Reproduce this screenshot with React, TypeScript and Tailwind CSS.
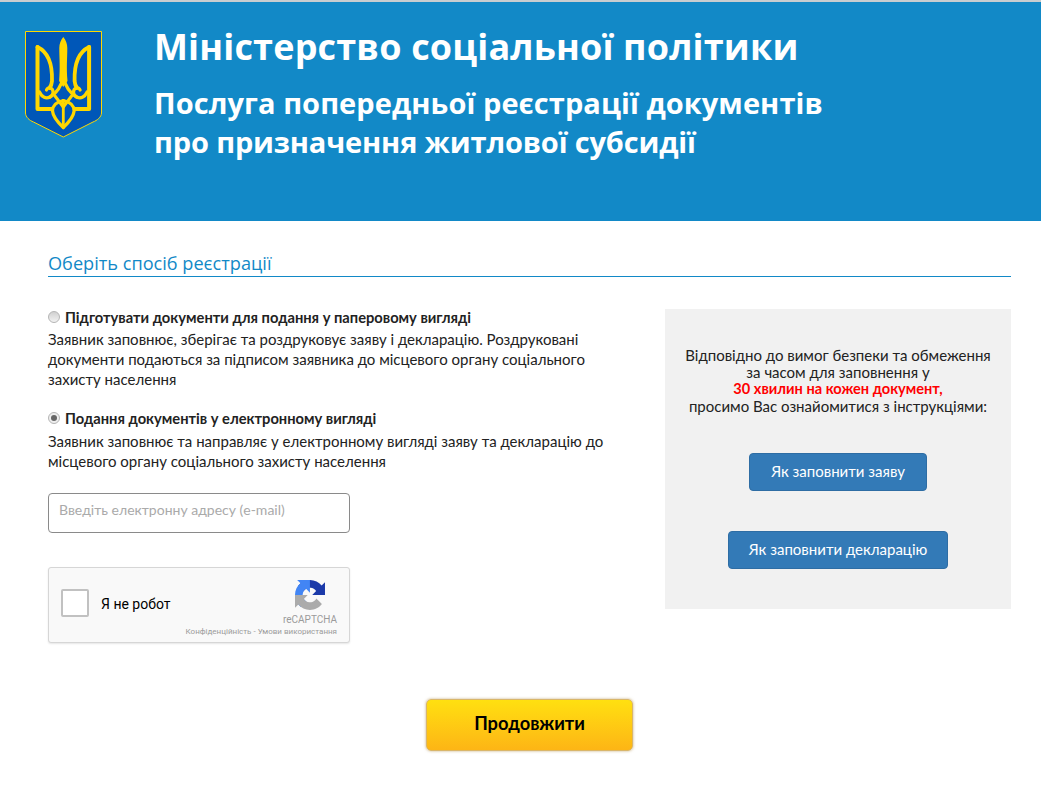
const tridentHalf = (
  <g fill="none" stroke="#ffd700" strokeWidth="4" strokeLinejoin="round" strokeLinecap="round">
    <path d="M12.5 16V78H27" />
    <path d="M12.5 16C23 21 27.5 33 27 50C26.8 53 26 55 24.5 57" strokeWidth="3.8" />
    <path d="M38.3 46C36.5 54 32 62 25 66" strokeWidth="3.4" />
    <path d="M14.5 61C17 66.5 21 68 25 66C29 64 29 58.5 25.5 57C23.5 56.3 22 57.5 21.5 59" strokeWidth="3.2" />
    <path d="M38.3 69.5C31 71 27.5 75 27.5 80C28 86 33 91.5 38.3 96.5" strokeWidth="3.2" />
    <path d="M30 65L38.3 76" strokeWidth="3" />
  </g>
);

const Trident = () => (
  <svg width="77" height="107" viewBox="0 0 77 107" className="shrink-0">
    <path d="M0.5 0.5H76.5V82C76.5 86 72 89.5 68 91L38.3 106L8.5 91C4.5 89.5 0.5 86 0.5 82Z" fill="#0057b8" stroke="#ffd700" strokeWidth="1" />
    {tridentHalf}
    <g transform="translate(76.6 0) scale(-1 1)">{tridentHalf}</g>
    <path d="M38.3 70V96" fill="none" stroke="#ffd700" strokeWidth="2.8" />
    <path d="M38.3 6C41 9 42.3 13 42.3 17C42.3 28 41.3 36 42.5 50L38.3 56L34.1 50C35.3 36 34.3 28 34.3 17C34.3 13 35.6 9 38.3 6Z" fill="#ffd700" />
  </svg>
);

const Recaptcha = () => (
  <svg width="30" height="30" viewBox="0 0 64 64" className="shrink-0">
    <path d="M64 31.955l-.033-1.37V4.687l-7.16 7.16C50.948 4.674 42.033.093 32.05.093c-10.4 0-19.627 4.96-25.477 12.628l11.733 11.857a15.57 15.57 0 0 1 4.75-5.33c2.05-1.6 4.952-2.906 8.99-2.906.488 0 .866.057 1.144.164 5.004.395 9.34 3.16 11.894 7.173l-8.306 8.306 32.2-.03" fill="#1c3aa9" />
    <path d="M31.862 0l-1.37.033H4.594l7.16 7.16C4.58 13.05 0 21.965 0 31.95c0 10.4 4.96 19.627 12.628 25.477l11.857-11.733a15.57 15.57 0 0 1-5.33-4.75c-1.6-2.05-2.906-4.952-2.906-8.99 0-.488.057-.866.164-1.144.395-5.004 3.16-9.34 7.173-11.894l8.306 8.306L31.862 0" fill="#4285f4" />
    <path d="M.001 32l.033 1.37v25.898l7.16-7.16C13.052 59.28 21.967 63.86 31.95 63.86c10.4 0 19.627-4.96 25.477-12.628L45.57 39.375a15.57 15.57 0 0 1-4.75 5.33c-2.05 1.6-4.952 2.906-8.99 2.906-.488 0-.866-.057-1.144-.164-5.004-.395-9.34-3.16-11.894-7.173l8.306-8.306-32.2.03" fill="#ababab" />
  </svg>
);

export default function App() {
  return (
    <div className="min-h-[786px] bg-white font-['Lato','Liberation_Sans',sans-serif] text-[15px] leading-[20px] text-[#222]">
      {/* Header */}
      <header className="flex h-[221px] gap-[52px] border-t-2 border-[#c8cdd0] bg-[#1289c7] pl-[25px] pt-[29px]">
        <Trident />
        <div className="font-['Open_Sans',sans-serif] font-bold text-white">
          <h1 className="-mt-[2px] text-[36px] leading-[36px] tracking-[0.17px]">Міністерство соціальної політики</h1>
          <h2 className="mt-[19px] text-[29px] leading-[38.5px] tracking-[0.07px]">
            Послуга попередньої реєстрації документів
            <br />
            <span className="tracking-[-0.15px]">про призначення житлової субсидії</span>
          </h2>
        </div>
      </header>

      <main className="pl-[48px] pr-[30px] pt-[30px]">
        <h3 className="border-b border-[#1289c7] pb-[1px] font-['Open_Sans',sans-serif] text-[18.15px] leading-[24px] text-[#1289c7]">
          Оберіть спосіб реєстрації
        </h3>

        <div className="mt-[32px] flex justify-between">
          {/* Registration options */}
          <div className="w-[570px]">
            <div className="-mt-[2px] flex items-center gap-[5px] text-[14.7px] font-bold">
              <span className="h-3 w-3 rounded-full border border-[#b5b5b5] bg-gradient-to-b from-[#d0d0d0] to-[#f2f2f2]" />
              Підготувати документи для подання у паперовому вигляді
            </div>
            <p className="mt-[2px]">
              Заявник заповнює, зберігає та роздруковує заяву і декларацію. Роздруковані документи подаються за підписом заявника до місцевого органу соціального захисту населення
            </p>
            <div className="mt-[19px] flex items-center gap-[5px] text-[14.7px] font-bold">
              <span className="flex h-3 w-3 items-center justify-center rounded-full border border-[#b5b5b5] bg-[#eee]">
                <span className="h-[6px] w-[6px] rounded-full bg-[#666]" />
              </span>
              Подання документів у електронному вигляді
            </div>
            <p className="mt-[3px]">
              Заявник заповнює та направляє у електронному вигляді заяву та декларацію до місцевого органу соціального захисту населення
            </p>

            <input
              placeholder="Введіть електронну адресу (e-mail)"
              className="mt-[22px] block h-[40px] w-[302px] rounded-[4px] border border-[#8a8a8a] px-[10px] pb-[8px] text-[14px] placeholder:text-[#aaa]"
            />

            {/* reCAPTCHA */}
            <div className="mt-[34px] flex h-[76px] w-[302px] items-start rounded-[3px] border border-[#d6d6d6] bg-[#f9f9f9] pl-[12px] pt-[21px] shadow-[0_1px_2px_rgba(0,0,0,0.1)]">
              <span className="h-[28px] w-[28px] rounded-[2px] border-2 border-[#c1c1c1] bg-white" />
              <span className="ml-[12px] mt-[6px] font-['Roboto',sans-serif] text-[14px] leading-[18px] text-black">Я не робот</span>
              <div className="ml-auto mr-[12px] -mt-[9px] flex flex-col items-end font-['Roboto',sans-serif] text-[#9b9b9b]">
                <div className="mr-[12px]">
                  <Recaptcha />
                </div>
                <span className="mt-[3px] text-[10px] leading-[13px]">reCAPTCHA</span>
                <span className="mt-[1px] whitespace-nowrap text-[8px] leading-[10px]">Конфіденційність - Умови використання</span>
              </div>
            </div>
          </div>

          {/* Instructions panel */}
          <aside className="flex h-[300px] w-[346px] flex-col items-center bg-[#f1f1f1] pt-[38px] text-center">
            <p className="leading-[16.5px]">
              Відповідно до вимог безпеки та обмеження
              <br />
              за часом для заповнення у
              <br />
              <b className="text-[14.6px] text-[#f00]">30 хвилин на кожен документ,</b>
              <br />
              просимо Вас ознайомитися з інструкціями:
            </p>
            <button className="mt-[39px] h-[38px] w-[178px] rounded-[4px] border border-[#2e6da4] bg-[#337ab7] pb-[3px] text-white">Як заповнити заяву</button>
            <button className="mt-[40px] h-[38px] w-[220px] rounded-[4px] border border-[#2e6da4] bg-[#337ab7] pb-[3px] text-white">Як заповнити декларацію</button>
          </aside>
        </div>

        <div className="flex justify-center">
          <button className="mt-[56px] h-[52px] w-[207px] rounded-[5px] border border-[#d9b66a] bg-gradient-to-b from-[#ffe010] to-[#fdb515] pb-[4px] text-[18.3px] font-bold text-black shadow-[0_0_3px_rgba(160,120,40,0.6)]">
            Продовжити
          </button>
        </div>
      </main>
    </div>
  );
}
